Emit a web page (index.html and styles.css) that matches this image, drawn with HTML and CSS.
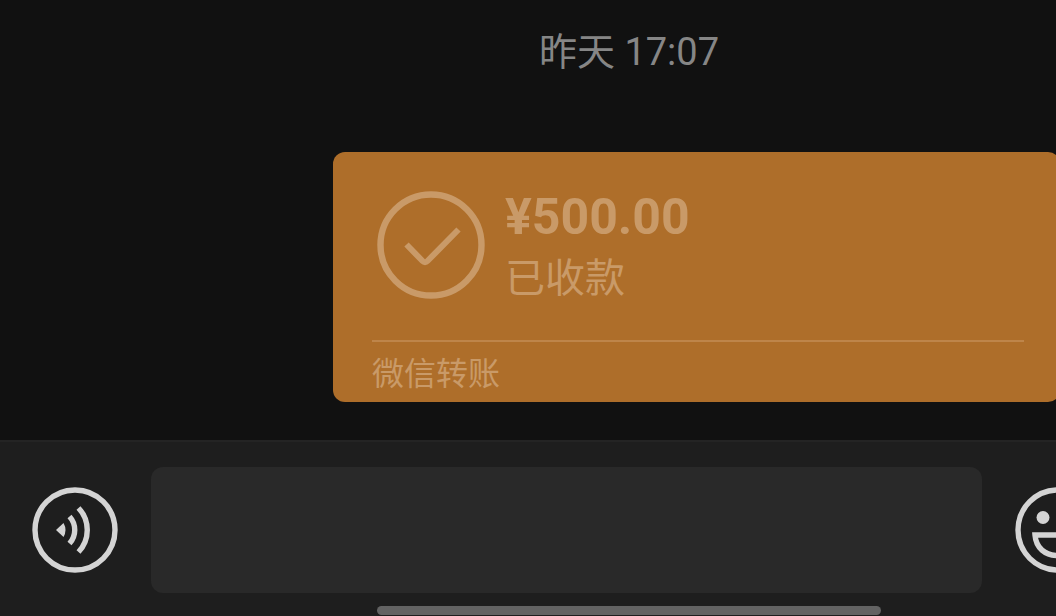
FILE: index.html
```
<!DOCTYPE html>
<html lang="zh-CN">
<head>
<meta charset="utf-8">
<meta name="viewport" content="width=device-width, initial-scale=1">
<title>微信转账</title>
<link rel="stylesheet" href="styles.css">
</head>
<body>
<div class="screen">
  <main class="chat">
    <time class="chat-time">昨天 17:07</time>
    <article class="transfer">
      <div class="transfer-main">
        <svg class="transfer-icon" viewBox="0 0 108 108" aria-hidden="true">
          <circle cx="54" cy="54" r="50.5" fill="none" stroke="currentColor" stroke-width="6.4"/>
          <path d="M29.5 53.5 L45.5 70 Q48 72.5 50.5 70 L81.5 38.5" fill="none" stroke="currentColor" stroke-width="6"/>
        </svg>
        <div class="transfer-text">
          <strong class="transfer-amount">¥500.00</strong>
          <span class="transfer-status">已收款</span>
        </div>
      </div>
      <footer class="transfer-source">微信转账</footer>
    </article>
  </main>
  <div class="composer">
    <div class="composer-row">
      <button class="icon-button" type="button" aria-label="语音">
        <svg viewBox="0 0 86 86" aria-hidden="true">
          <circle cx="43" cy="43" r="40" fill="none" stroke="currentColor" stroke-width="5.4"/>
          <path d="M24 43 L31.5 36 Q35.5 43 31.5 50 Z" fill="currentColor"/>
          <path d="M37.5 29.5 A20 20 0 0 1 37.5 56.5 M46.5 21 A32 32 0 0 1 46.5 65" fill="none" stroke="currentColor" stroke-width="5.4"/>
        </svg>
      </button>
      <textarea class="composer-input" aria-label="消息"></textarea>
      <button class="icon-button" type="button" aria-label="表情">
        <svg viewBox="0 0 86 86" aria-hidden="true">
          <circle cx="43" cy="43" r="40" fill="none" stroke="currentColor" stroke-width="5.4"/>
          <circle cx="28" cy="30.5" r="6.5" fill="currentColor"/>
          <circle cx="58" cy="30.5" r="6.5" fill="currentColor"/>
          <path d="M20 48 H66 C65 61 56 68.500 43 68.500 C30 68.500 21 61 20 48 Z" fill="none" stroke="currentColor" stroke-width="5.4"/>
        </svg>
      </button>
    </div>
    <div class="home-indicator"></div>
  </div>
</div>
</body>
</html>
```
FILE: styles.css
```
* {
  box-sizing: border-box;
}

body {
  margin: 0;
  overflow: hidden;
  background: #111;
  font-family: "Noto Sans CJK SC", sans-serif;
}

/* The conversation runs past the right edge of the window. */
.screen {
  display: flex;
  flex-direction: column;
  width: calc(100% + 202px);
  min-height: 100vh;
}

.chat {
  flex: 1;
  display: flex;
  flex-direction: column;
  gap: 72px;
  padding: 24px 0 38px;
}

.chat-time {
  align-self: center;
  font-family: Roboto, "Noto Sans CJK SC", sans-serif;
  font-size: 38px;
  line-height: 56px;
  color: #868686;
}

.transfer {
  margin: 0 198px 0 333px;
  padding: 35px 36px 0 39px;
  border-radius: 12px;
  background: #ae6e2a;
  color: #c99a68;
}

.transfer-main {
  display: flex;
  align-items: center;
  gap: 20px;
  padding: 0 5px 37px;
}

.transfer-icon {
  flex: none;
  width: 108px;
  height: 108px;
}

.transfer-text {
  display: flex;
  flex-direction: column;
}

.transfer-amount {
  font-family: Roboto, sans-serif;
  font-size: 50px;
  line-height: 60px;
}

.transfer-status {
  font-size: 40px;
  line-height: 56px;
}

.transfer-source {
  padding-bottom: 2px;
  border-top: 2px solid #be854a;
  font-size: 32px;
  line-height: 58px;
}

.composer {
  border-top: 2px solid #242424;
  background: #1e1e1e;
}

.composer-row {
  display: flex;
  align-items: center;
  gap: 33px;
  padding: 25px 157px 13px 32px;
}

.icon-button {
  flex: none;
  width: 86px;
  height: 86px;
  padding: 0;
  border: 0;
  background: none;
  color: #d4d4d4;
}

.icon-button svg {
  display: block;
}

.composer-input {
  flex: 1;
  min-width: 0;
  height: 126px;
  padding: 32px 24px;
  border: 0;
  border-radius: 12px;
  outline: 0;
  resize: none;
  background: #292929;
  color: #d4d4d4;
  font: inherit;
  font-size: 40px;
}

.home-indicator {
  width: 40%;
  height: 9px;
  margin: 0 auto 1px;
  border-radius: 5px;
  background: #636363;
}
```
